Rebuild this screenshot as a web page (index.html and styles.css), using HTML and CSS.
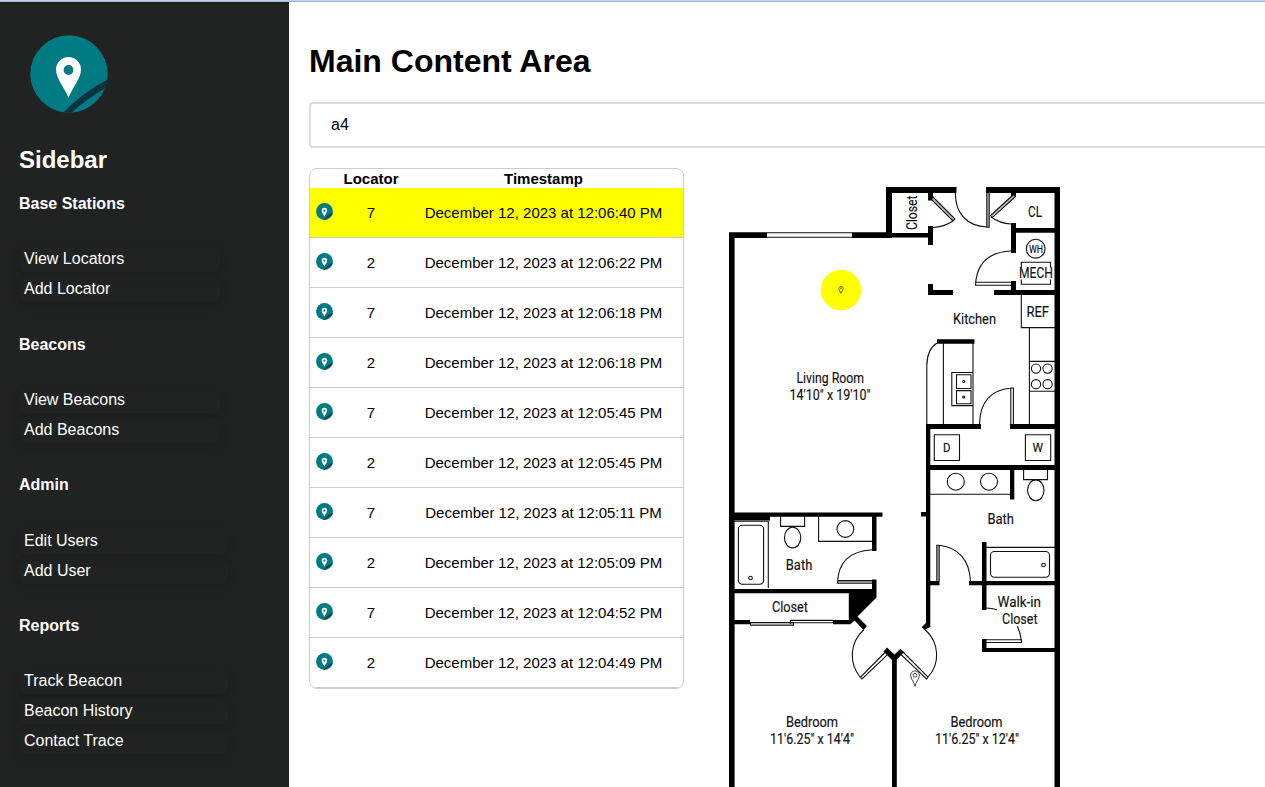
FILE: index.html
```
<!DOCTYPE html>
<html lang="en">
<head>
    <meta charset="UTF-8">
    <meta name="viewport" content="width=device-width, initial-scale=1.0">
    <title>Beacon Tracker</title>
    <link rel="stylesheet" href="styles.css">
</head>
<body>
    <!-- shared logo, used in the sidebar and in each table row -->
    <svg class="defs" width="0" height="0">
        <symbol id="logo" viewBox="0 0 78 78">
            <clipPath id="logo-clip"><circle cx="39" cy="39" r="38.7"/></clipPath>
            <circle cx="39" cy="39" r="38.7" fill="#007b83"/>
            <path d="M31 80 Q50 59 80 43 L80 51 Q57 63 39 80 Z" fill="#0b3440" clip-path="url(#logo-clip)"/>
            <path fill-rule="evenodd" d="M38.5 63 C35 53 26 44 26 34.5 a12.5 12.5 0 0 1 25 0 C51 44 42 53 38.5 63 Z M43.4 35 a4.9 4.9 0 1 0 -9.8 0 a4.9 4.9 0 1 0 9.8 0 Z" fill="#fff"/>
        </symbol>
    </svg>

    <div class="top-line"></div>
    <div class="layout">
        <div class="sidebar">
            <svg class="logo"><use href="#logo"/></svg>
            <h2>Sidebar</h2>
            <div class="menu">
                <h4>Base Stations</h4>
                <ul>
                    <li>View Locators</li>
                    <li>Add Locator</li>
                </ul>
            </div>
            <div class="menu">
                <h4>Beacons</h4>
                <ul>
                    <li>View Beacons</li>
                    <li>Add Beacons</li>
                </ul>
            </div>
            <div class="menu wide">
                <h4>Admin</h4>
                <ul>
                    <li>Edit Users</li>
                    <li>Add User</li>
                </ul>
            </div>
            <div class="menu wide">
                <h4>Reports</h4>
                <ul>
                    <li>Track Beacon</li>
                    <li>Beacon History</li>
                    <li>Contact Trace</li>
                </ul>
            </div>
        </div>

        <div class="content">
            <h1>Main Content Area</h1>
            <input class="search" type="text" value="a4">
            <div class="panels">
                <div class="history">
                    <div class="row head"><span></span><span>Locator</span><span>Timestamp</span></div>
                    <div class="row active"><svg class="icon"><use href="#logo"/></svg><span>7</span><span>December 12, 2023 at 12:06:40 PM</span></div>
                    <div class="row"><svg class="icon"><use href="#logo"/></svg><span>2</span><span>December 12, 2023 at 12:06:22 PM</span></div>
                    <div class="row"><svg class="icon"><use href="#logo"/></svg><span>7</span><span>December 12, 2023 at 12:06:18 PM</span></div>
                    <div class="row"><svg class="icon"><use href="#logo"/></svg><span>2</span><span>December 12, 2023 at 12:06:18 PM</span></div>
                    <div class="row"><svg class="icon"><use href="#logo"/></svg><span>7</span><span>December 12, 2023 at 12:05:45 PM</span></div>
                    <div class="row"><svg class="icon"><use href="#logo"/></svg><span>2</span><span>December 12, 2023 at 12:05:45 PM</span></div>
                    <div class="row"><svg class="icon"><use href="#logo"/></svg><span>7</span><span>December 12, 2023 at 12:05:11 PM</span></div>
                    <div class="row"><svg class="icon"><use href="#logo"/></svg><span>2</span><span>December 12, 2023 at 12:05:09 PM</span></div>
                    <div class="row"><svg class="icon"><use href="#logo"/></svg><span>7</span><span>December 12, 2023 at 12:04:52 PM</span></div>
                    <div class="row"><svg class="icon"><use href="#logo"/></svg><span>2</span><span>December 12, 2023 at 12:04:49 PM</span></div>
                </div>

                <svg class="floorplan" viewBox="720 168 350 619">
                    <!-- walls -->
                    <path class="wall" d="M729 232.3H767V238H734.6V787H729Z M852 232.3H886V187H956.5V193H892V233H928V226H933V245H928V237.5H892V238H852Z
                        M986 187H1060V787H1054.5V652H982V639H986.5V648H1054.5V585.3H986.5V610H982V585.3H969V581H982V542H986.5V581H1054.5V470H1014.3V499.5H1010V470H930.3V581H939.5V585.3H930.3V627L924.5 630 921.8 627 926 623V516.5H921V512H926V424H981V429H930.3V465H1054.5V429H1010V424H1054.5V295H994V290H1011V281H1016V290H1054.5V232.7H1016V253H1011V223H1016V228H1054.5V193H1016V197H1011V193H986Z
                        M928 193H933V200.5H928Z M928 284H933V290H953V295H928Z M937 339.3H974.5V343.8H937Z
                        M734 512.5H882.5V516.8H876.5V551H872V516.8H770V520.5H734Z
                        M734 589H872V579.5H876.5V597.5L857.5 616.5 867 626 863.5 630 854.5 620.5 850.5 624.3H833V620H848.8V593.3H734Z M734 620H750V624.3H734Z
                        M892 787V660L883.5 651.5 887 647.5 894.5 654.5 900.5 648.7 904 652.2 896.8 659.5V787Z"/>

                    <!-- fixtures, counters and doors -->
                    <path class="leaf" d="M938 545.2V581M838 582H872M751 624H793M988 193V227M932.5 198.8L953.8 219.8M1014 196L991.5 216.2"/>
                    <g class="thin">
                        <path d="M767 232.8H852M767 237.3H852"/>
                        <path d="M931.5 199.5L953 221 955 219 933 197M953 221Q944 227 933 227.5"/>
                        <path d="M986.8 193V227.2H989.2V193M955.3 193C955.5 214 967 226 987 227"/>
                        <path d="M1013 195L990.5 215.5 992.5 217.3 1015 197M991 217Q1000 223.5 1011 224"/>
                        <path d="M1011 251C989 252 976.5 263 975.5 285.3H1011M975.5 282.3H1011"/>
                        <circle cx="1035.7" cy="248.7" r="9.4"/>
                        <path d="M1021.3 267.5V262.3H1050.5V267.5M1021.3 279.5V284.3H1050.5V279.5"/>
                        <path d="M1021.3 295V327.6H1055M1029.4 327.6V424M1029.4 361.4H1055M1029.4 391.2H1055"/>
                        <circle cx="1036" cy="368.6" r="4.6"/><circle cx="1047.6" cy="368.6" r="4.6"/>
                        <circle cx="1036" cy="384.2" r="4.6"/><circle cx="1047.6" cy="384.2" r="4.6"/>
                        <path d="M937 343Q927 349 926.8 366V424M943.4 343V424M973 343V424"/>
                        <path d="M973 372.5H951.8V405.6H973M956.5 374.7H971V388.5H956.5ZM956.5 390.6H971V403.7H956.5Z"/>
                        <circle cx="963.7" cy="381.5" r="1"/><circle cx="963.7" cy="397" r="1"/>
                        <path d="M1013.4 424V388H1010.8V424M1011 388C991 390 980 402 979.5 424"/>
                        <path d="M934.3 434.8H959.5V460.5H934.3ZM1025.4 434.8H1050.7V460.5H1025.4Z"/>
                        <path d="M930 494.2H1010"/>
                        <circle cx="955.8" cy="481.7" r="8.5"/><circle cx="989" cy="481.7" r="8.5"/>
                        <path d="M1023.6 470V479.6H1047.5V470"/>
                        <ellipse cx="1035.8" cy="490.3" rx="8.2" ry="10.4"/>
                        <path d="M986 547.4H1055"/>
                        <rect x="990.5" y="551.5" width="59" height="25.8" rx="4"/><circle cx="1043.5" cy="565" r="1.8"/>
                        <path d="M936.8 581V545.2H939.2V581M939 545.2C958 547 969.5 560 970.5 581"/>
                        <path d="M986 639.7H1021.5V642.5H986M986 608Q992 608.3 997 609.7M1017.3 626Q1020.5 633 1021.5 641"/>
                        <path d="M734 521.2H768.3V588"/>
                        <rect x="738.4" y="525.3" width="25.2" height="59" rx="4"/><circle cx="750.5" cy="578" r="1.8"/>
                        <path d="M780.6 516V526.4H804.6V516M818.6 516V541.4H872"/>
                        <ellipse cx="792.6" cy="537.6" rx="8.2" ry="10.3"/><circle cx="845.4" cy="529" r="8.4"/>
                        <path d="M872 549.7C850 551 838 561 837.5 583.3H872M837.5 580.6H872"/>
                        <path d="M750.5 622.5H793.5V625.2H750.5ZM790.3 624V620.4H833M790.3 622.7H833"/>
                        <path d="M864 629.5C849 643 849 664 860.5 677.5M885.5 652L860.5 677 862 679 887.8 654.3"/>
                        <path d="M925 629.5C940 643 940 664 928 677M902.5 651.5L928 677 926.5 679 900.3 653.8"/>
                    </g>

                    <!-- room labels -->
                    <g class="label">
                        <text x="196" y="917" transform="matrix(0 -1 1 0 0 426)" textLength="34.5" lengthAdjust="spacingAndGlyphs">Closet</text>
                        <text x="1028" y="216.8" textLength="14" lengthAdjust="spacingAndGlyphs">CL</text>
                        <text class="small" x="1029" y="252.5" textLength="14" lengthAdjust="spacingAndGlyphs">WH</text>
                        <text x="1019" y="278.2" textLength="34" lengthAdjust="spacingAndGlyphs">MECH</text>
                        <text x="1026.5" y="316.6" textLength="22.5" lengthAdjust="spacingAndGlyphs">REF</text>
                        <text x="953" y="324" textLength="43" lengthAdjust="spacingAndGlyphs">Kitchen</text>
                        <text x="796.5" y="383" textLength="67.5" lengthAdjust="spacingAndGlyphs">Living Room</text>
                        <text x="789.5" y="399.8" textLength="81" lengthAdjust="spacingAndGlyphs">14′10″ x 19′10″</text>
                        <text class="mid" x="943" y="452" textLength="7.5" lengthAdjust="spacingAndGlyphs">D</text>
                        <text class="mid" x="1032.5" y="452" textLength="10.5" lengthAdjust="spacingAndGlyphs">W</text>
                        <text x="987.5" y="524.3" textLength="26.5" lengthAdjust="spacingAndGlyphs">Bath</text>
                        <text x="785.8" y="570.3" textLength="26.5" lengthAdjust="spacingAndGlyphs">Bath</text>
                        <text x="772" y="611.8" textLength="36" lengthAdjust="spacingAndGlyphs">Closet</text>
                        <text x="997.5" y="607.4" textLength="43.5" lengthAdjust="spacingAndGlyphs">Walk-in</text>
                        <text x="1002" y="624.4" textLength="35.5" lengthAdjust="spacingAndGlyphs">Closet</text>
                        <text x="786" y="727" textLength="52" lengthAdjust="spacingAndGlyphs">Bedroom</text>
                        <text x="770" y="743.8" textLength="84" lengthAdjust="spacingAndGlyphs">11′6.25″ x 14′4″</text>
                        <text x="950.5" y="727" textLength="52" lengthAdjust="spacingAndGlyphs">Bedroom</text>
                        <text x="935" y="743.8" textLength="84" lengthAdjust="spacingAndGlyphs">11′6.25″ x 12′4″</text>
                    </g>

                    <!-- locator pins -->
                    <circle cx="841" cy="290" r="20.2" fill="#ff0"/>
                    <g class="pin active-pin">
                        <path d="M841 293.3L839 289.6A2.2 2.2 0 1 1 843 289.6Z"/><circle cx="841" cy="288.3" r="0.6"/>
                    </g>
                    <g class="pin">
                        <path d="M915 686.3C914.5 682.5 910.6 679 910.6 675.3A4.4 4.4 0 0 1 919.4 675.3C919.4 679 915.5 682.5 915 686.3Z"/><circle cx="915" cy="675.3" r="1.9"/>
                    </g>
                </svg>
            </div>
        </div>
    </div>
</body>
</html>
```
FILE: styles.css
```
* {
    box-sizing: border-box;
}
body {
    margin: 0;
    height: 787px;
    overflow: hidden;
    font-family: "Liberation Sans", Arial, sans-serif;
    background: #fff;
}
.defs {
    display: block;
}
.top-line {
    height: 2px;
    background: #bcd4f6;
    border-bottom: 1px solid #a3b4cf;
}
.layout {
    display: flex;
    height: 785px;
}
.sidebar {
    flex: 0 0 289px;
    padding: 33px 19px 0;
    background: #212322;
    color: #fff;
}
.logo {
    display: block;
    width: 78px;
    height: 78px;
    margin-left: 11px;
}
.sidebar h2 {
    margin: 32px 0 21px;
    font-size: 24px;
    line-height: 29px;
}
.menu {
    margin-bottom: 33.47px;
}
.menu h4 {
    margin: 0 0 33.2px;
    font-size: 16px;
    line-height: 18px;
}
.menu ul {
    display: flex;
    flex-direction: column;
    gap: 4px;
    width: 201px;
    margin: 0;
    padding: 0;
    list-style: none;
}
.menu.wide ul {
    width: 209px;
}
.menu li {
    height: 26px;
    padding-left: 5px;
    border-radius: 8px;
    line-height: 25px;
    font-size: 16px;
    box-shadow: 0 4px 8px rgba(0, 0, 0, 0.1);
}
.content {
    flex: none;
    width: 1000px;
    padding: 40px 0 0 20px;
}
.content h1 {
    margin: 0 0 22px;
    font-size: 32px;
    line-height: 38px;
}
.search {
    display: block;
    width: 980px;
    height: 46px;
    padding: 0 20px;
    border: 2px solid #ddd;
    border-radius: 4px;
    font-family: inherit;
    font-size: 16px;
    color: #000;
}
.panels {
    display: flex;
    align-items: flex-start;
    margin-top: 20px;
}
.history {
    width: 375px;
    border: 1px solid #ccc;
    border-radius: 8px;
    overflow: hidden;
    font-size: 15px;
}
.row {
    display: grid;
    grid-template-columns: 28px 66px 279px;
    align-items: center;
    height: 50px;
    border-bottom: 1px solid #ccc;
    text-align: center;
}
.row.head {
    height: 19px;
    border-bottom: none;
    font-weight: bold;
}
.row.active {
    background: #ff0;
}
.icon {
    width: 17px;
    height: 17px;
    margin: -2px 0 0 5.5px;
}
.floorplan {
    width: 350px;
    height: 619px;
    margin-left: 36px;
}
.wall {
    fill: #000;
}
.thin {
    fill: none;
    stroke: #111;
    stroke-width: 1.1;
}
.leaf {
    fill: none;
    stroke: #bbb;
    stroke-width: 2;
}
.label {
    font-family: Roboto, sans-serif;
    font-size: 14px;
    fill: #111;
    stroke: #111;
    stroke-width: 0.15;
}
.label .small {
    font-size: 10px;
}
.label .mid {
    font-size: 12px;
}
.pin {
    fill: none;
    stroke: #444;
    stroke-width: 1;
}
.active-pin {
    stroke: #66661a;
}
```
